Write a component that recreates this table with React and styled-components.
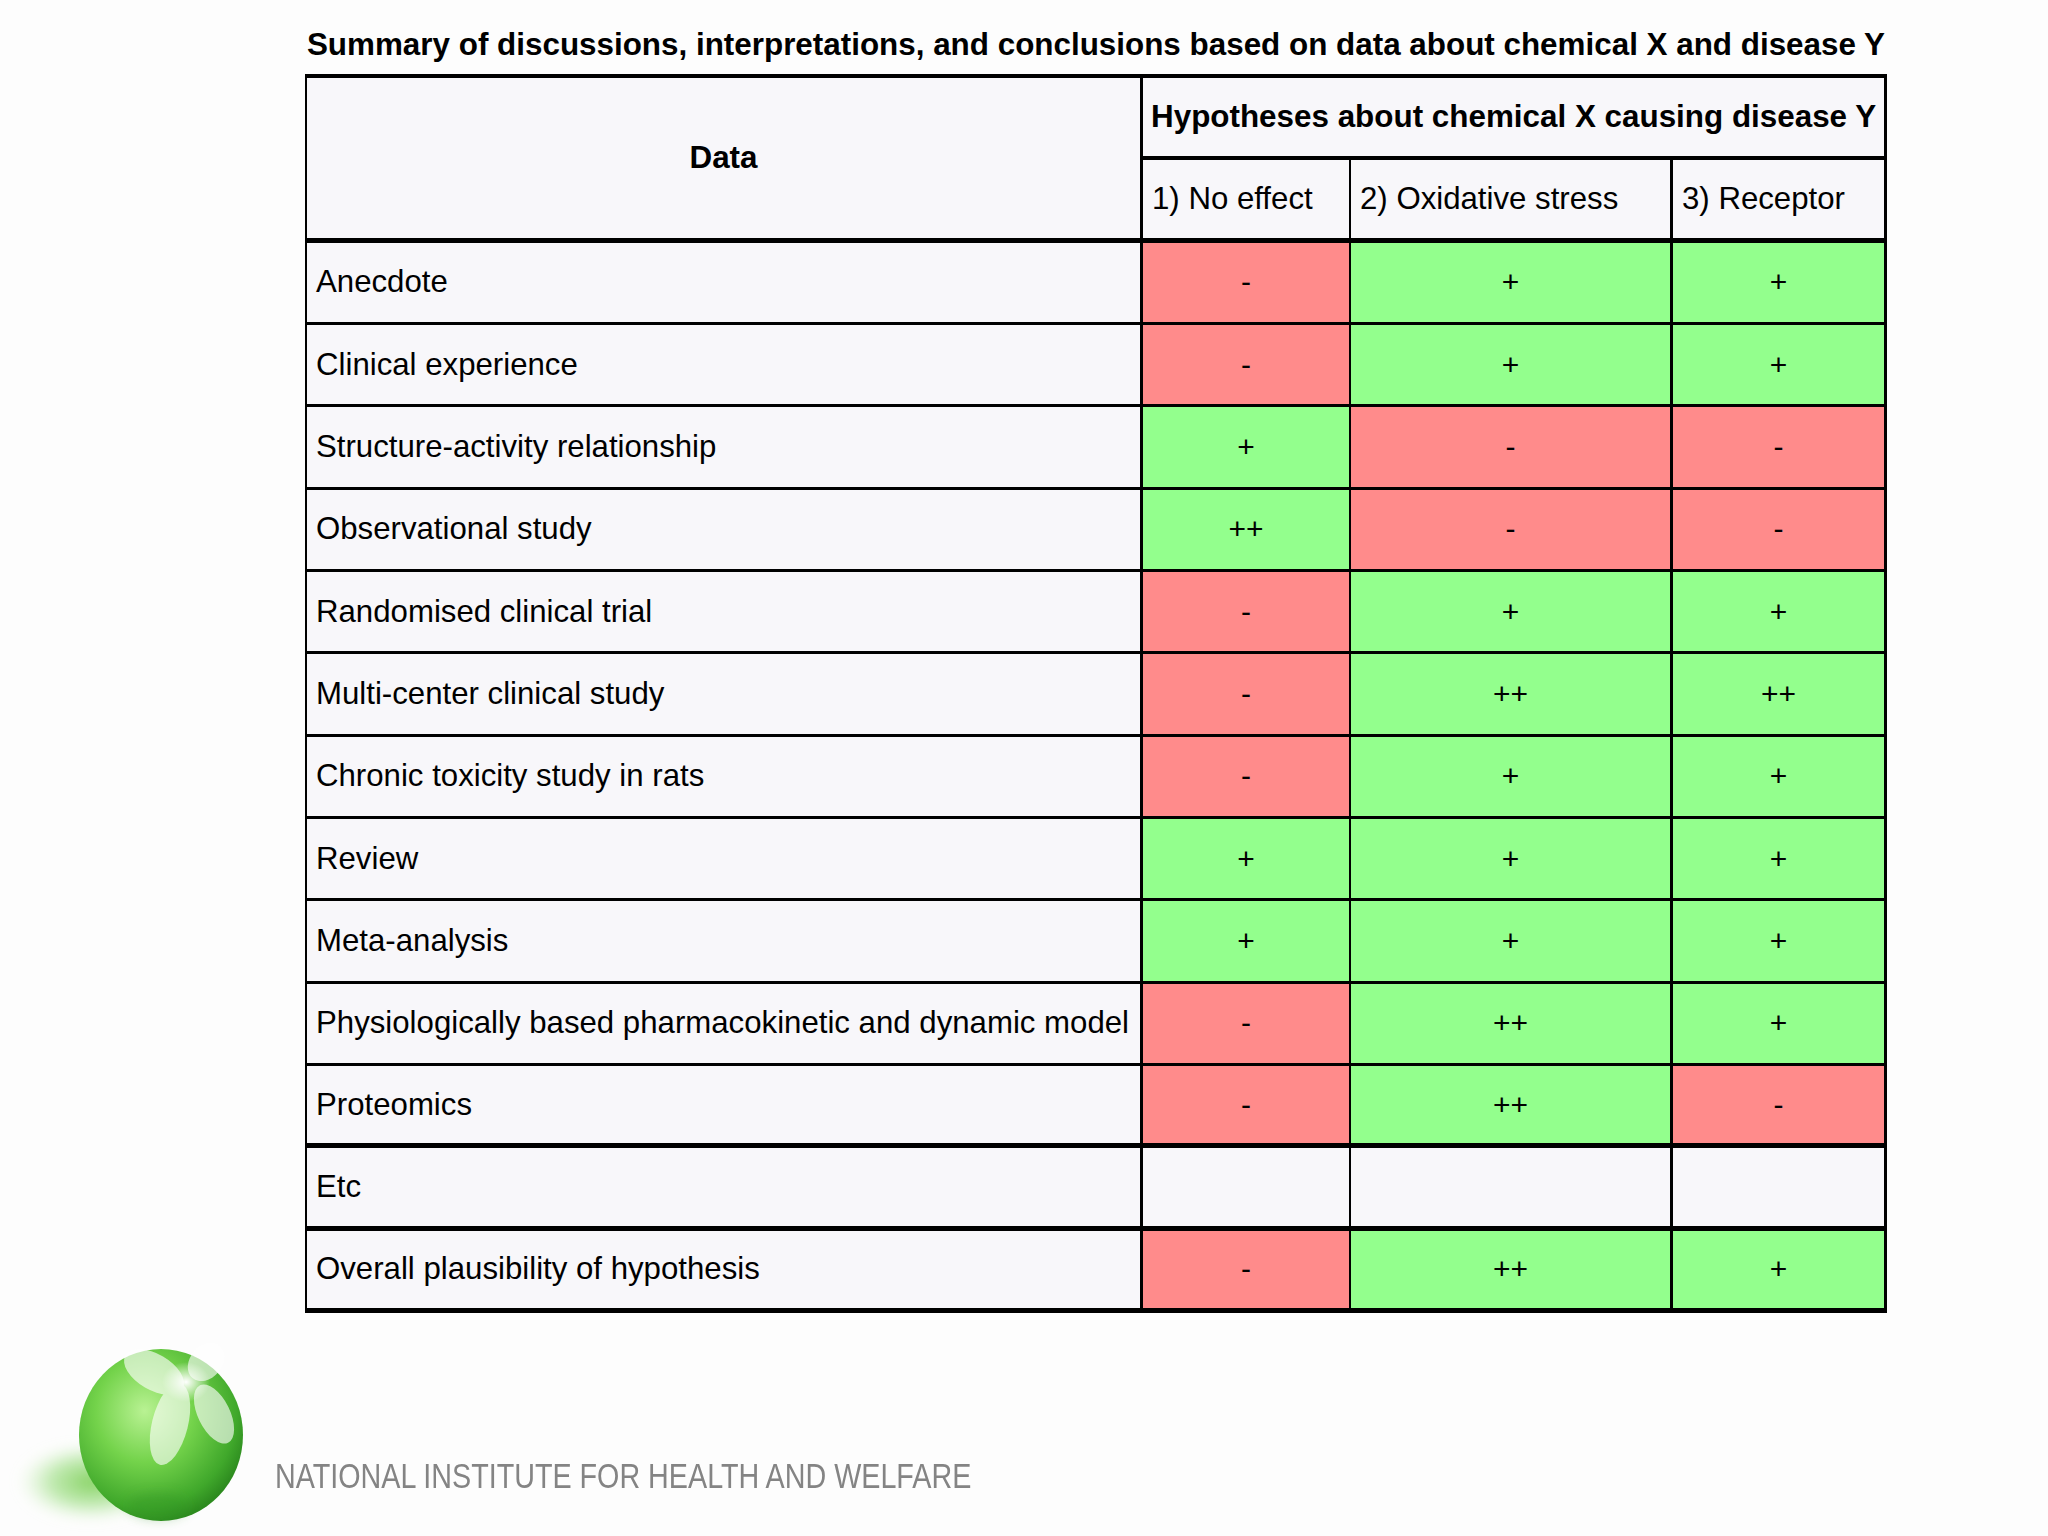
import React from 'react';
import styled, { createGlobalStyle } from 'styled-components';

const GlobalStyle = createGlobalStyle`
  html, body {
    margin: 0;
    padding: 0;
    background: #fdfdfd;
  }
`;

const RED = '#ff8b8b';
const GREEN = '#93ff8d';
const PLAIN = '#f8f7fa';

const PageWrapper = styled.div`
  width: 2048px;
  height: 1536px;
  overflow: hidden;
  background: #fdfdfd;
  font-family: 'Liberation Sans', Arial, sans-serif;
  color: #000;
`;

const Sheet = styled.div`
  margin-left: 305px;
  width: 1582px;
`;

const Title = styled.div`
  padding-top: 27px;
  margin-bottom: 11px;
  line-height: 36px;
  font-size: 31.4px;
  font-weight: 700;
  text-align: center;
  white-space: nowrap;
`;

const Grid = styled.div`
  display: grid;
  grid-template-columns: 836px 208px 322px 211px;
  grid-auto-rows: 82.33px;
  border-left: 2px solid #000;
  border-top: 4px solid #000;
  border-right: 3px solid #000;
`;

const Cell = styled.div`
  box-sizing: border-box;
  display: flex;
  align-items: center;
  justify-content: ${(p) => (p.$center ? 'center' : 'flex-start')};
  padding: 0 0 0 ${(p) => (p.$center ? 0 : 9)}px;
  background: ${(p) => p.$bg || PLAIN};
  border-right: ${(p) => p.$br || 0}px solid #000;
  border-bottom: ${(p) => p.$bb || 0}px solid #000;
  grid-column: ${(p) => p.$col || 'auto'};
  grid-row: ${(p) => p.$row || 'auto'};
  font-size: ${(p) => (p.$bold ? 31.4 : 31.2)}px;
  font-weight: ${(p) => (p.$bold ? 700 : 400)};
  white-space: nowrap;
`;

const Mark = styled.span`
  font-size: 30px;
  line-height: 1;
`;

const Footer = styled.div`
  display: flex;
  align-items: flex-start;
  margin-top: 23px;
  padding-left: 4px;
`;

const InstituteName = styled.div`
  margin: 120px 0 0 5px;
  line-height: 40px;
  font-size: 35px;
  color: #848484;
  white-space: nowrap;
  transform: scaleX(0.82);
  transform-origin: left center;
`;

const rows = [
  ['Anecdote', '-', '+', '+'],
  ['Clinical experience', '-', '+', '+'],
  ['Structure-activity relationship', '+', '-', '-'],
  ['Observational study', '++', '-', '-'],
  ['Randomised clinical trial', '-', '+', '+'],
  ['Multi-center clinical study', '-', '++', '++'],
  ['Chronic toxicity study in rats', '-', '+', '+'],
  ['Review', '+', '+', '+'],
  ['Meta-analysis', '+', '+', '+'],
  ['Physiologically based pharmacokinetic and dynamic model', '-', '++', '+'],
  ['Proteomics', '-', '++', '-'],
  ['Etc', '', '', ''],
  ['Overall plausibility of hypothesis', '-', '++', '+'],
];

// vertical line widths after each column (last one is the grid's own border)
const colRight = [3, 2, 3, 0];

function markColor(v) {
  if (v.includes('+')) return GREEN;
  if (v.includes('-')) return RED;
  return PLAIN;
}

function Logo() {
  return (
    <svg width="266" height="200" viewBox="0 0 266 200">
      <defs>
        <radialGradient id="ball" cx="40%" cy="36%" r="66%">
          <stop offset="0%" stopColor="#b9f293" />
          <stop offset="45%" stopColor="#74d34b" />
          <stop offset="85%" stopColor="#40a82b" />
          <stop offset="100%" stopColor="#2d8b1f" />
        </radialGradient>
        <radialGradient id="shade" cx="55%" cy="45%" r="50%">
          <stop offset="0%" stopColor="#86d262" stopOpacity="1" />
          <stop offset="55%" stopColor="#ace397" stopOpacity="0.75" />
          <stop offset="100%" stopColor="#d8f3ca" stopOpacity="0" />
        </radialGradient>
        <radialGradient id="glow" cx="50%" cy="50%" r="50%">
          <stop offset="0%" stopColor="#ffffff" stopOpacity="1" />
          <stop offset="100%" stopColor="#ffffff" stopOpacity="0" />
        </radialGradient>
        <filter id="soft" x="-30%" y="-40%" width="160%" height="180%">
          <feGaussianBlur stdDeviation="6" />
        </filter>
      </defs>
      <ellipse cx="80" cy="150" rx="74" ry="40" fill="url(#shade)" filter="url(#soft)" />
      <ellipse cx="157" cy="99" rx="82" ry="86" fill="url(#ball)" />
      <ellipse cx="154" cy="170" rx="30" ry="13" fill="#2f9220" opacity="0.35" filter="url(#soft)" />
      <g fill="#ffffff" opacity="0.62">
        <ellipse cx="150" cy="36" rx="33" ry="18" transform="rotate(30 150 36)" />
        <ellipse cx="166" cy="88" rx="18" ry="42" transform="rotate(14 166 88)" />
        <ellipse cx="210" cy="78" rx="16" ry="32" transform="rotate(-26 210 78)" />
        <ellipse cx="202" cy="26" rx="16" ry="21" transform="rotate(40 202 26)" />
      </g>
      <ellipse cx="182" cy="46" rx="24" ry="20" fill="url(#glow)" />
    </svg>
  );
}

export default function App() {
  return (
    <PageWrapper>
      <GlobalStyle />
      <Sheet>
        <Title>
          Summary of discussions, interpretations, and conclusions based on data about chemical X and disease Y
        </Title>
        <Grid>
          <Cell $bold $center $br={3} $bb={5} $row="1 / span 2" $col="1">
            Data
          </Cell>
          <Cell $bold $bb={4} $col="2 / span 3" style={{ paddingLeft: 8 }}>
            Hypotheses about chemical X causing disease Y
          </Cell>
          <Cell $br={2} $bb={5}>1) No effect</Cell>
          <Cell $br={3} $bb={5}>2) Oxidative stress</Cell>
          <Cell $bb={5}>3) Receptor</Cell>
          {rows.map((row, i) => {
            const bb = i >= 10 ? 5 : 3;
            return (
              <React.Fragment key={row[0]}>
                <Cell $br={colRight[0]} $bb={bb}>
                  {row[0]}
                </Cell>
                {row.slice(1).map((v, j) => (
                  <Cell key={j} $center $bg={markColor(v)} $br={colRight[j + 1]} $bb={bb}>
                    <Mark>{v}</Mark>
                  </Cell>
                ))}
              </React.Fragment>
            );
          })}
        </Grid>
      </Sheet>
      <Footer>
        <Logo />
        <InstituteName>NATIONAL INSTITUTE FOR HEALTH AND WELFARE</InstituteName>
      </Footer>
    </PageWrapper>
  );
}
